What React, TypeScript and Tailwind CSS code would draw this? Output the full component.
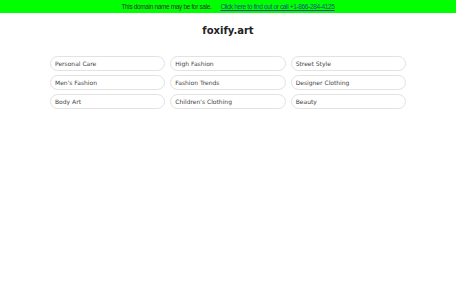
export default function App() {
  const items = [
    "Personal Care",
    "High Fashion",
    "Street Style",
    "Men's Fashion",
    "Fashion Trends",
    "Designer Clothing",
    "Body Art",
    "Children's Clothing",
    "Beauty",
  ];

  return (
    <div className="min-h-[300px] bg-white">
      <div className="flex h-[13px] items-center justify-center gap-[9px] bg-[#00ff00] font-['Liberation_Sans',Arial,sans-serif] text-[6.5px] tracking-[-0.35px] text-[#333]">
        <span>This domain name may be for sale.</span>
        <a href="#" className="text-[#1a4a8a] underline">
          Click here to find out or call +1-866-284-4125
        </a>
      </div>

      <h1 className="mt-[10px] text-center font-['DejaVu_Sans',sans-serif] text-[10px] font-bold text-[#222]">
        foxify.art
      </h1>

      <div className="mx-auto mt-[18px] grid w-[356px] grid-cols-3 gap-x-[5px] gap-y-[4px] font-['DejaVu_Sans',sans-serif]">
        {items.map((item) => (
          <div
            key={item}
            className="flex h-[15px] items-center rounded-full border border-[#e2e2e2] px-[4px] text-[6px] text-[#444]"
          >
            {item}
          </div>
        ))}
      </div>
    </div>
  );
}
